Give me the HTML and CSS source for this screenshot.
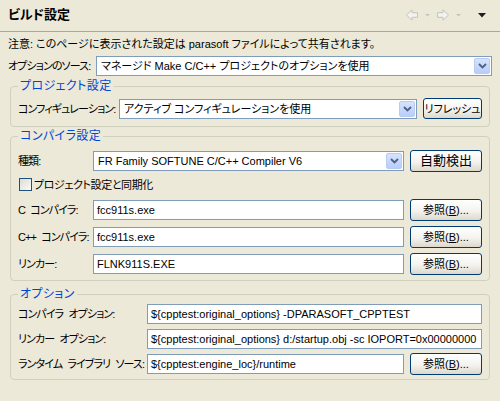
FILE: index.html
```html
<!DOCTYPE html>
<html lang="ja">
<head>
<meta charset="utf-8">
<title>ビルド設定</title>
<link rel="stylesheet" href="styles.css">
</head>
<body>
<div class="page">
  <header class="hdr">
    <h1 class="title">ビルド設定</h1>
    <svg class="nav" width="82" height="12" viewBox="0 0 82 12">
      <polygon points="0.5,6 6,0.8 6,3.7 11.5,3.7 11.5,8.3 6,8.3 6,11.2" fill="#f2f2ee" stroke="#c4c4bc" stroke-width="1"/>
      <polygon points="19,5 24,5 21.5,7.5" fill="#c4c4bc"/>
      <polygon points="42.5,6 37,0.8 37,3.7 31.5,3.7 31.5,8.3 37,8.3 37,11.2" fill="#f2f2ee" stroke="#c4c4bc" stroke-width="1"/>
      <polygon points="50,5 55,5 52.5,7.5" fill="#c4c4bc"/>
      <polygon points="72,4 80,4 76,8.5" fill="#1e1e1e"/>
    </svg>
  </header>
  <main class="content">
    <p class="note">注意: このページに表示された設定は parasoft ファイルによって共有されます。</p>
    <div class="row r-top">
      <span class="lbl w-top">オプションのソース:</span>
      <div class="combo grow"><span class="val">マネージド Make C/C++ プロジェクトのオプションを使用</span><span class="dd"><svg width="9" height="6" viewBox="0 0 9 6"><polyline points="1,1 4.5,4.5 8,1" fill="none" stroke="#4d6185" stroke-width="1.8"/></svg></span></div>
    </div>

    <fieldset class="group g1">
      <legend>プロジェクト設定</legend>
      <div class="row r21">
        <span class="lbl w-g1">コンフィギュレーション:</span>
        <div class="combo grow"><span class="val">アクティブ コンフィギュレーションを使用</span><span class="dd"><svg width="9" height="6" viewBox="0 0 9 6"><polyline points="1,1 4.5,4.5 8,1" fill="none" stroke="#4d6185" stroke-width="1.8"/></svg></span></div>
        <button class="btn b-refresh">リフレッシュ</button>
      </div>
    </fieldset>

    <fieldset class="group g2">
      <legend>コンパイラ設定</legend>
      <div class="row r21">
        <span class="lbl w-g2">種類:</span>
        <div class="combo grow"><span class="val">FR Family SOFTUNE C/C++ Compiler V6</span><span class="dd"><svg width="9" height="6" viewBox="0 0 9 6"><polyline points="1,1 4.5,4.5 8,1" fill="none" stroke="#4d6185" stroke-width="1.8"/></svg></span></div>
        <button class="btn b-wide big">自動検出</button>
      </div>
      <label class="row chk-row">
        <span class="chk"></span>
        <span class="chk-text">プロジェクト設定と同期化</span>
      </label>
      <div class="row r22 m7">
        <span class="lbl w-g2">C コンパイラ:</span>
        <div class="field grow">fcc911s.exe</div>
        <button class="btn b-wide">参照(<u>B</u>)...</button>
      </div>
      <div class="row r22 m5">
        <span class="lbl w-g2">C++ コンパイラ:</span>
        <div class="field grow">fcc911s.exe</div>
        <button class="btn b-wide">参照(<u>B</u>)...</button>
      </div>
      <div class="row r22 m5">
        <span class="lbl w-g2">リンカー:</span>
        <div class="field grow">FLNK911S.EXE</div>
        <button class="btn b-wide">参照(<u>B</u>)...</button>
      </div>
    </fieldset>

    <fieldset class="group g3">
      <legend>オプション</legend>
      <div class="row r21">
        <span class="lbl w-g3">コンパイラ オプション:</span>
        <div class="field grow">${cpptest:original_options} -DPARASOFT_CPPTEST</div>
      </div>
      <div class="row r21 m4">
        <span class="lbl w-g3">リンカー オプション:</span>
        <div class="field grow">${cpptest:original_options} d:/startup.obj -sc IOPORT=0x00000000</div>
      </div>
      <div class="row r21 m4">
        <span class="lbl w-g3">ランタイム ライブラリ ソース:</span>
        <div class="field grow">${cpptest:engine_loc}/runtime</div>
        <button class="btn b-wide">参照(<u>B</u>)...</button>
      </div>
    </fieldset>
  </main>
</div>
</body>
</html>
```

FILE: styles.css
```css
* { box-sizing: border-box; }

html, body {
  margin: 0;
  padding: 0;
}

body {
  width: 500px;
  height: 401px;
  overflow: hidden;
  background: #ece9d8;
  color: #000;
  font-family: "Liberation Sans", "Noto Sans CJK JP", sans-serif;
  font-size: 11px;
  font-feature-settings: "palt";
}

.page {
  display: flex;
  flex-direction: column;
}

.hdr {
  height: 32px;
  border-bottom: 1px solid #aca899;
  display: flex;
  align-items: center;
  justify-content: space-between;
  padding: 0 12px 2px 8px;
}

.title {
  margin: 0;
  font-size: 13px;
  font-weight: bold;
  line-height: 16px;
}

.nav { display: block; }

.content {
  display: flex;
  flex-direction: column;
  padding: 2px 8px 0;
}

.note {
  margin: 0;
  height: 20px;
  line-height: 20px;
  white-space: nowrap;
}

.row {
  display: flex;
  align-items: center;
  gap: 6px;
}

.r-top { height: 21px; margin-top: 1px; gap: 4px; }
.r21 { height: 21px; }
.r22 { height: 22px; }
.m4 { margin-top: 4px; }
.m5 { margin-top: 5px; }
.m7 { margin-top: 7px; }

.lbl {
  flex: none;
  white-space: nowrap;
  line-height: 16px;
  letter-spacing: -0.9px;
  word-spacing: 3px;
}
.w-top { width: 84px; }
.w-g1 { width: 97px; margin-right: -2px; }
.w-g2 { width: 69px; }
.w-g3 { width: 125px; margin-right: -2px; }

.grow { flex: 1; min-width: 0; }

.group {
  margin: 3px 2px 0;
  padding: 5px 7px 7px;
  border: 1px solid #d0d0bf;
  border-radius: 4px;
  min-width: 0;
}
.g2 { margin-top: 2px; padding-top: 7px; padding-bottom: 5px; }
.g3 { margin-top: 6px; padding-top: 2px; padding-bottom: 5px; }

.group legend {
  padding: 0 2px;
  color: #0046d5;
  line-height: 14px;
  font-size: 12px;
  letter-spacing: 0.4px;
}

.combo {
  display: flex;
  height: 20px;
  border: 1px solid #7f9db9;
  background: #fff;
}
.combo .val {
  flex: 1;
  min-width: 0;
  padding-left: 4px;
  line-height: 18px;
  white-space: nowrap;
  overflow: hidden;
}
.combo .dd {
  flex: none;
  width: 16px;
  margin: 1px;
  border: 1px solid #b8cbf4;
  border-radius: 2px;
  background: linear-gradient(#d7e2fd, #b9cdfa);
  display: flex;
  align-items: center;
  justify-content: center;
}
.combo .dd svg { display: block; }

.field {
  height: 20px;
  border: 1px solid #7f9db9;
  background: #fff;
  padding: 0 3px;
  line-height: 18px;
  white-space: nowrap;
  overflow: hidden;
}

.btn {
  flex: none;
  height: 22px;
  padding: 0;
  border: 1px solid #003c74;
  border-radius: 3px;
  background: linear-gradient(#ffffff, #f4f3ee 55%, #dcd8cc);
  font: inherit;
  color: #000;
  line-height: 18px;
  text-align: center;
  white-space: nowrap;
}
.b-refresh { width: 59px; height: 21px; }
.b-wide { width: 72px; }
.big { font-size: 13px; }

.chk-row {
  height: 16px;
  margin-top: 5px;
  gap: 2px;
  padding-left: 1px;
}
.chk-text { letter-spacing: -0.4px; }
.chk {
  width: 13px;
  height: 13px;
  border: 1px solid #1c5180;
  background: linear-gradient(135deg, #dcdcd4, #fafaf8);
}
```
